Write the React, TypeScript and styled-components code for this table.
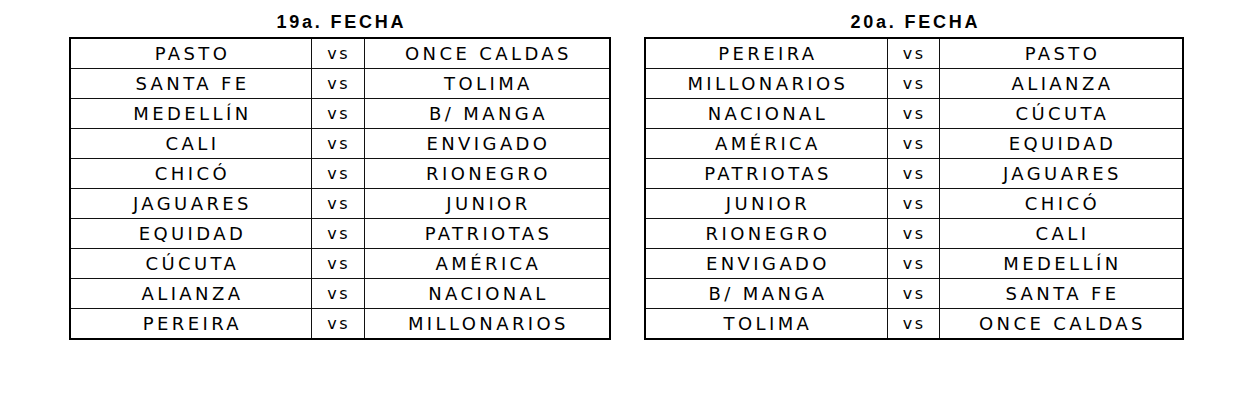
import styled, { createGlobalStyle } from 'styled-components';

const GlobalStyle = createGlobalStyle`
  html, body {
    margin: 0;
    padding: 0;
    background: #ffffff;
  }
`;

const Page = styled.div`
  display: flex;
  gap: 33px;
  padding: 11px 0 0 69px;
  width: 1233px;
  height: 402px;
  box-sizing: border-box;
`;

const Block = styled.div`
  display: flex;
  flex-direction: column;
`;

const Title = styled.div`
  font-family: "Liberation Sans", Arial, sans-serif;
  font-weight: bold;
  font-size: 18px;
  letter-spacing: 2.8px;
  padding-left: 2.8px;
  text-align: center;
  height: 26px;
  line-height: 22px;
  color: #000;
`;

const Table = styled.table<{ $w: number }>`
  width: ${(p) => p.$w}px;
  border-collapse: collapse;
  border: 2px solid #000;
  table-layout: fixed;
`;

const Col = styled.col<{ $w?: number }>`
  width: ${(p) => (p.$w ? `${p.$w}px` : 'auto')};
`;

const Cell = styled.td<{ $small?: boolean }>`
  height: 29px;
  padding: 0 0 0 ${(p) => (p.$small ? '2.5px' : '3.4px')};
  border: 1px solid #111;
  text-align: center;
  vertical-align: middle;
  font-family: "DejaVu Sans", "Liberation Sans", sans-serif;
  font-size: ${(p) => (p.$small ? '16px' : '18px')};
  letter-spacing: ${(p) => (p.$small ? '2.5px' : '3.4px')};
  color: #000;
  line-height: 1;
  white-space: nowrap;
  overflow: hidden;
`;

type Match = [string, string];

const fecha19: Match[] = [
  ['PASTO', 'ONCE CALDAS'],
  ['SANTA FE', 'TOLIMA'],
  ['MEDELLÍN', 'B/ MANGA'],
  ['CALI', 'ENVIGADO'],
  ['CHICÓ', 'RIONEGRO'],
  ['JAGUARES', 'JUNIOR'],
  ['EQUIDAD', 'PATRIOTAS'],
  ['CÚCUTA', 'AMÉRICA'],
  ['ALIANZA', 'NACIONAL'],
  ['PEREIRA', 'MILLONARIOS'],
];

const fecha20: Match[] = [
  ['PEREIRA', 'PASTO'],
  ['MILLONARIOS', 'ALIANZA'],
  ['NACIONAL', 'CÚCUTA'],
  ['AMÉRICA', 'EQUIDAD'],
  ['PATRIOTAS', 'JAGUARES'],
  ['JUNIOR', 'CHICÓ'],
  ['RIONEGRO', 'CALI'],
  ['ENVIGADO', 'MEDELLÍN'],
  ['B/ MANGA', 'SANTA FE'],
  ['TOLIMA', 'ONCE CALDAS'],
];

const Fecha = ({ title, matches, width, cols }: { title: string; matches: Match[]; width: number; cols: number[] }) => (
  <Block>
    <Title>{title}</Title>
    <Table $w={width}>
      <colgroup>
        <Col $w={cols[0]} />
        <Col $w={cols[1]} />
        <Col />
      </colgroup>
      <tbody>
        {matches.map(([home, away]) => (
          <tr key={home}>
            <Cell>{home}</Cell>
            <Cell $small>vs</Cell>
            <Cell>{away}</Cell>
          </tr>
        ))}
      </tbody>
    </Table>
  </Block>
);

const App = () => (
  <>
    <GlobalStyle />
    <Page>
      <Fecha title="19a. FECHA" matches={fecha19} width={542} cols={[241, 53]} />
      <Fecha title="20a. FECHA" matches={fecha20} width={540} cols={[242, 52]} />
    </Page>
  </>
);

export default App;
